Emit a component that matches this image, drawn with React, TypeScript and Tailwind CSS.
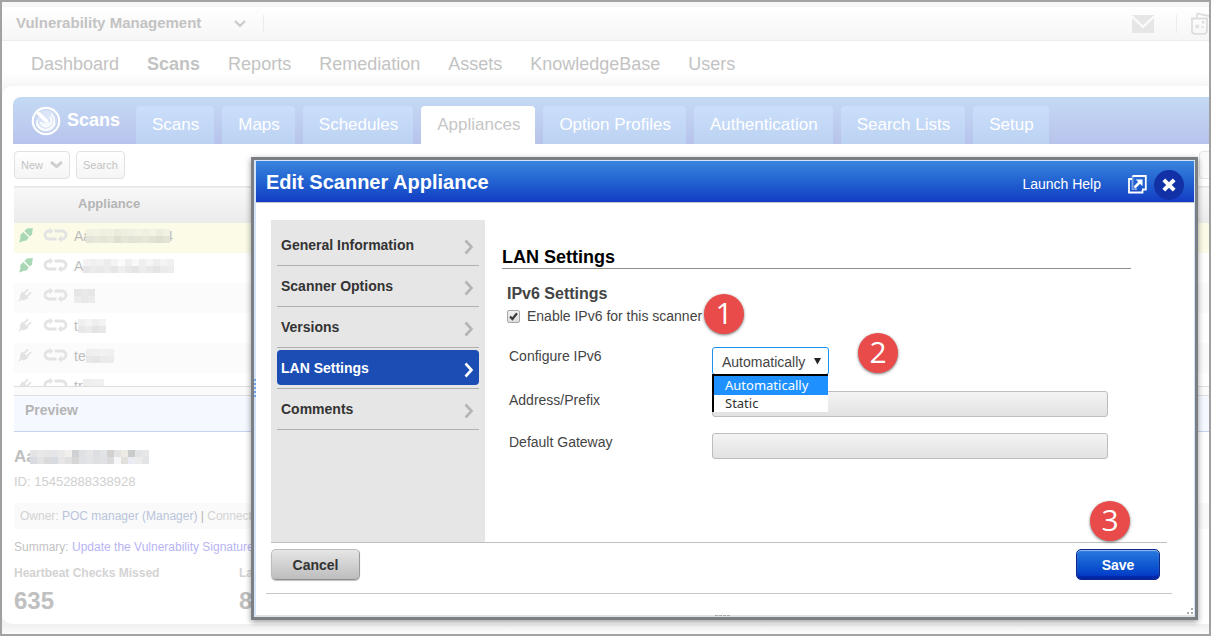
import React, { useState } from "react";

const mainNav = ["Dashboard", "Scans", "Reports", "Remediation", "Assets", "KnowledgeBase", "Users"];
const tabs = ["Scans", "Maps", "Schedules", "Appliances", "Option Profiles", "Authentication", "Search Lists", "Setup"];
const steps = ["General Information", "Scanner Options", "Versions", "LAN Settings", "Comments"];

type Row = { name: string; online: boolean; blocks: string[][]; tail?: string };

const rows: Row[] = [
  {
    name: "Aa",
    online: true,
    blocks: [
      ["#f1f1e2", "#f3f3e3", "#f0f0e0", "#f1f1e1", "#ececdd", "#eeeedf", "#f0f0e2", "#f3f3e4", "#f0f0e1", "#f3f3e4", "#ededde", "#f2f2e3"],
      ["#e4e4d8", "#e7e7da", "#e5e5d8", "#e9e9db", "#dfdfd2", "#e6e6d8", "#e2e2d5", "#e4e4d7", "#e8e8da", "#e3e3d5", "#dedfd0", "#e3e3d6"],
    ],
    tail: "4",
  },
  {
    name: "A",
    online: true,
    blocks: [
      ["#f3f3f3", "#f0f0f0", "#f2f2f2", "#ededed", "#f4f4f4", "#fbfbfb", "#f0f0f0", "#f9f9f9", "#efefef", "#f5f5f5", "#eeeeee", "#f4f4f4", "#f0f0f0"],
      ["#e6e6e6", "#ebebeb", "#e8e8e8", "#ececec", "#e6e6e6", "#efefef", "#e9e9e9", "#e5e5e5", "#ececec", "#e8e8e8", "#e4e4e4", "#ebebeb", "#ededed"],
    ],
  },
  { name: "", online: false, blocks: [["#e6e6e6", "#e9e9e9", "#e6e6e6"], ["#ececec", "#e8e8e8", "#ebebeb"]] },
  { name: "t", online: false, blocks: [["#efefef", "#f4f4f4", "#eeeeee", "#f3f3f3"], ["#e8e8e8", "#ebebeb", "#e4e4e4", "#e8e8e8"]] },
  { name: "te", online: false, blocks: [["#eeeeee", "#f0f0f0", "#f2f2f2", "#f0f0f0"], ["#e8e8e8", "#e5e5e5", "#ebebeb", "#ececec"]] },
  { name: "tr", online: false, blocks: [["#eeeeee", "#f0f0f0", "#f0f0f0"], ["#e8e8e8", "#e8e8e8", "#ebebeb"]] },
];

const previewBlocks = [
  ["#e2e4e6", "#e8e8e8", "#e6e6e6", "#e4e6e9", "#e9e9e9", "#f2f0ec", "#cfd1d5", "#e0e1e4", "#e6e6e6", "#dcdee2", "#e2e3e6", "#d2d1cf", "#e3e3e3", "#eeebe4", "#c9cbca", "#e2e3e4", "#e6e7e9"],
  ["#d9dbe0", "#e3e3e3", "#dadada", "#d7dadf", "#e6e6e6", "#e1e1e1", "#d6d6d6", "#e0e2e5", "#e2e4e6", "#e0e0e2", "#dfe1e4", "#dadada", "#f6f6f9", "#e2e0dc", "#e9ecf2", "#ebebeb", "#e2e4e6"],
];

function Mosaic({ blocks, className = "" }: { blocks: string[][]; className?: string }) {
  const w = blocks[0].length * 7;
  return (
    <svg width={w} height="14" viewBox={`0 0 ${w} 14`} aria-hidden="true" className={`relative shrink-0 ${className}`}>
      {blocks.map((line, y) =>
        line.map((c, x) => <rect key={`${x}-${y}`} x={x * 7} y={y * 7} width="7" height="7" fill={c} />)
      )}
    </svg>
  );
}

function PlugIcon({ online }: { online: boolean }) {
  return online ? (
    <svg width="16" height="16" viewBox="0 0 16 16" fill="#a9d8b6" aria-hidden="true">
      <path d="M14.8 1 L9 1.4 L6.4 4 L11.8 9.6 L14 7.2 Z" />
      <path d="M5.4 5 L10.8 10.6 L8.6 13.4 L5 14 L2.4 15.6 L1.2 14.4 L2.2 12.6 L2.4 8 Z" />
    </svg>
  ) : (
    <svg width="14" height="14" viewBox="0 0 14 14" fill="#e3e3e3" aria-hidden="true">
      <path d="M4.6 3.6 L10.4 9.4 C8.4 12 5.6 12.6 3.4 11.8 L1.6 13.4 L0.4 12.4 L2.2 10.6 C1.4 8.2 2.2 5.4 4.6 3.6Z" />
      <path d="M6.5 4.8 L9.6 1.6 M9.4 7.7 L12.6 4.6" stroke="#e3e3e3" strokeWidth="1.8" strokeLinecap="round" />
    </svg>
  );
}

function LoopIcon() {
  return (
    <svg width="25" height="14" viewBox="0 0 25 14" fill="none" stroke="#e3e3e3" strokeWidth="2.8" aria-hidden="true">
      <path d="M13.5 11 H6 A4 4 0 0 1 6 3 H8" />
      <path d="M11.5 3 H19 A4 4 0 0 1 19 11 H17.5" />
      <path d="M6.6 -0.4 L10.2 3 L6.6 6.4Z M18.4 7.6 L14.8 11 L18.4 14.4Z" fill="#e3e3e3" stroke="none" />
    </svg>
  );
}

function RadarIcon() {
  return (
    <svg width="30" height="30" viewBox="0 0 30 30" fill="none" stroke="#fff" aria-hidden="true">
      <circle cx="15" cy="15" r="13.2" strokeWidth="2.2" />
      <circle cx="15" cy="15" r="11" fill="#dbe5f7" stroke="none" />
      <path d="M7.5 7.5 L15.5 15" strokeWidth="3.6" strokeLinecap="round" />
      <path d="M20.5 8 A9 9 0 1 1 5.6 14" strokeWidth="1.9" />
      <path d="M18.8 10.6 A5.6 5.6 0 1 1 9.6 16" strokeWidth="1.6" />
      <path d="M12.2 17 A3.4 3.4 0 0 0 18.2 16" strokeWidth="1.3" />
      <path d="M7 9 A10 10 0 0 0 5 18 M22 8 A10 10 0 0 1 25 17" stroke="#bccdf0" strokeWidth="0.9" />
    </svg>
  );
}

function Badge({ n, place }: { n: number; place: string }) {
  return (
    <span
      className={`absolute flex h-10 w-10 items-center justify-center rounded-full bg-[#e94a4a] pb-[3px] font-['Open_Sans',sans-serif] text-[30px] leading-10 text-white shadow-[0_1px_3px_rgba(0,0,0,0.55)] ${place}`}
    >
      {n}
    </span>
  );
}

function AppliancePage() {
  return (
    <div className="flex min-h-screen flex-col border-2 border-[#a3a3a3] bg-[#f7f7f7]">
      <header className="mt-1 flex h-[35px] items-center border-y border-t-[#f4f4f4] border-b-[#ececec] bg-linear-to-b from-white to-[#f6f6f6] pl-[14px] shadow-[0_1px_2px_rgba(0,0,0,0.05)]">
        <button type="button" className="flex items-center gap-[33px] text-[15px] font-bold text-[#c3c3c3]">
          Vulnerability Management
          <svg width="12" height="8" viewBox="0 0 12 8" fill="none" stroke="#cbcbcb" strokeWidth="2.4" aria-hidden="true">
            <path d="M1 1 L6 5.8 L11 1" />
          </svg>
        </button>
        <span className="ml-[17px] h-[18px] border-l border-[#ececec]" />
        <div className="ml-auto flex items-center gap-[14px]">
          <button type="button" aria-label="Messages" className="mr-2">
            <svg width="22" height="18" viewBox="0 0 22 18" aria-hidden="true">
              <rect width="22" height="18" fill="#e6e6e6" />
              <path d="M0 1.5 L11 12 L22 1.5" fill="none" stroke="#fcfcfc" strokeWidth="2.2" />
            </svg>
          </button>
          <span className="h-[18px] border-l border-[#ececec]" />
          <button type="button" aria-label="Applications">
            <svg width="18" height="24" viewBox="0 0 18 24" fill="none" stroke="#dedede" strokeWidth="1.8" aria-hidden="true">
              <path d="M5.5 5.5 L6.5 1.5 L18 4" />
              <path d="M1 6.5 H16 V20 L14 21.8 H3 L1 20Z" />
              <path d="M6.2 11.5 L7 13.4 L9 13.6 L7.6 15 L8 17 L6.2 16 L4.4 17 L4.8 15 L3.4 13.6 L5.4 13.4Z" fill="#dedede" stroke="none" />
              <path d="M11 9 h2.5 v2.5 h-2.5z M10.5 14 h2 v2 h-2z" fill="#dedede" stroke="none" />
            </svg>
          </button>
        </div>
      </header>

      <nav className="flex h-[45px] items-center gap-[28px] bg-linear-to-b from-white from-70% to-[#f7f7f7] pt-[2px] pl-[29px] text-[18px] text-[#c3c3c3]">
        {mainNav.map((n) => (
          <a key={n} href="#" className={n === "Scans" ? "font-bold" : ""}>
            {n}
          </a>
        ))}
      </nav>

      <main className="flex-1 rounded-l-[10px] bg-white pt-[11px] pl-[11px] shadow-[0_2px_6px_rgba(0,0,0,0.05)]">
        <div className="flex h-[47px] items-end gap-2 rounded-tl-lg bg-linear-to-b from-[#c4daf4] to-[#b8c3ec]">
          <div className="flex h-full w-[115px] items-center gap-[6px] pl-[18px]">
            <RadarIcon />
            <h1 className="text-[18px] font-bold text-white">Scans</h1>
          </div>
          {tabs.map((t) => (
            <a
              key={t}
              href="#"
              className={`flex h-[38px] items-center rounded-t pr-[15px] pl-4 text-[17px] ${
                t === "Appliances" ? "bg-white text-[#c6c6c6]" : "bg-linear-to-b from-[#cbdffb] to-[#bcd2f2] text-white"
              }`}
            >
              {t}
            </a>
          ))}
        </div>

        <div className="flex gap-[6px] pt-[7px] pl-px text-[11px] text-[#c3c3c3]">
          <button type="button" className="flex h-7 items-center gap-[7px] rounded border border-[#e2e2e2] bg-linear-to-b from-white to-[#f5f5f5] px-[6px]">
            New
            <svg width="13" height="8" viewBox="0 0 13 8" fill="none" stroke="#cfcfcf" strokeWidth="3" aria-hidden="true">
              <path d="M1 1 L6.5 5.6 L12 1" />
            </svg>
          </button>
          <button type="button" className="h-7 rounded border border-[#e2e2e2] bg-linear-to-b from-white to-[#f5f5f5] px-[6px]">
            Search
          </button>
          <button type="button" aria-label="List options" className="ml-auto h-7 w-[10px] rounded-l border border-r-0 border-[#e6e6e6] bg-[#fafafa]" />
        </div>

        <div className="mt-[7px] ml-px h-[200px] overflow-hidden">
          <table className="w-full table-fixed border-collapse text-[13px] text-[#bdbdbd]">
            <colgroup>
              <col className="w-[29px]" />
              <col className="w-[29px]" />
              <col />
            </colgroup>
            <thead>
              <tr className="h-9 border-t border-[#e6e6e6] bg-linear-to-b from-[#f8f8f8] to-[#ebebeb]">
                <th />
                <th />
                <th className="pb-[3px] pl-[6px] text-left font-bold text-[#b5b5b5]">Appliance</th>
              </tr>
            </thead>
            <tbody>
              {rows.map((r, i) => (
                <tr key={i} className={`h-[30px] ${i === 0 ? "bg-[#fbfbe8]" : i % 2 === 0 ? "bg-[#fbfbfb]" : "bg-white"}`}>
                  <td className="pb-[5px] pl-1">
                    <PlugIcon online={r.online} />
                  </td>
                  <td className="pb-[5px]">
                    <LoopIcon />
                  </td>
                  <td className="pb-1 pl-[2px]">
                    <span className="flex items-center text-sm">
                      {r.name}
                      <Mosaic blocks={r.blocks} className={r.tail ? "-mx-[5px]" : ""} />
                      {r.tail}
                    </span>
                  </td>
                </tr>
              ))}
            </tbody>
          </table>
        </div>

        <section className="ml-px">
          <div className="h-[10px] border-y border-[#dedede] bg-[#fbfbfb]" />
          <h2 className="h-9 border-b border-[#c6d3ec] bg-[#f5f9ff] pt-1 pl-[11px] text-sm font-bold text-[#b5b5b5]">Preview</h2>
          <h3 className="flex items-center pt-[13px] text-[17px] leading-6 font-bold text-[#c0c0c0]">
            Aa
            <Mosaic blocks={previewBlocks} className="-ml-[6px]" />
          </h3>
          <p className="pt-px text-[13px] leading-6 text-[#d0d0d0]">ID: 15452888338928</p>
          <p className="mt-[9px] bg-[#fafafa] pl-[6px] text-xs leading-[26px] text-[#d3d3d3]">
            Owner: <span className="text-[#b9c4da]">POC manager (Manager)</span> <span className="text-[#b5b5b5]">|</span> Connected
          </p>
          <p className="pt-[6px] text-xs leading-6 text-[#c3c3c3]">
            Summary:{" "}
            <a href="#" className="text-[#b8b4f4]">
              Update the Vulnerability Signatures
            </a>
          </p>
          <dl className="flex pt-[2px] font-bold">
            <div className="w-[225px]">
              <dt className="text-xs leading-6 text-[#d3d3d3]">Heartbeat Checks Missed</dt>
              <dd className="text-2xl text-[#c0c0c0]">635</dd>
            </div>
            <div>
              <dt className="text-xs leading-6 text-[#d3d3d3]">Last</dt>
              <dd className="text-2xl text-[#c0c0c0]">8</dd>
            </div>
          </dl>
        </section>
      </main>
      <footer className="h-[10px] bg-linear-to-b from-[#f0f0f0] to-[#fbfbfb]" />
    </div>
  );
}

function EditDialog() {
  const [enabled, setEnabled] = useState(true);
  const [mode, setMode] = useState("Automatically");
  return (
    <div
      role="dialog"
      aria-labelledby="dialog-title"
      className="absolute top-[157px] right-[13px] left-[251px] border-[3px] border-[#7b7f84] bg-white shadow-[0_2px_6px_rgba(0,0,0,0.4)]"
    >
      <div className="relative border border-b-2 border-l-2 border-[#d3e3fa] border-b-[#e2e2e2] text-sm text-[#444]">
        <header className="flex h-[42px] items-center border-b border-[#c4c4cc] bg-linear-to-b from-[#3a84dc] to-[#153bc4] pr-[10px] pl-[10px] text-white">
          <h2 id="dialog-title" className="text-xl font-bold">
            Edit Scanner Appliance
          </h2>
          <a href="#" className="ml-auto pt-[4px]">
            Launch Help
          </a>
          <button type="button" aria-label="Open in new window" className="ml-[27px] pt-[5px]">
            <svg width="19" height="19" viewBox="0 0 19 19" fill="none" stroke="#fff" strokeWidth="1.8" aria-hidden="true">
              <path d="M4 4 H1 V17.5 H14.5 V15" />
              <path d="M4.5 1 H17.8 V14.5 H14" />
              <path d="M4.5 1 V14.2 H9" strokeOpacity="0.45" />
              <path d="M6.5 12.5 L12.5 6.5" strokeWidth="2.6" />
              <path d="M7.8 4.5 H14.5 V11.2Z" fill="#fff" stroke="none" />
            </svg>
          </button>
          <button type="button" aria-label="Close" className="mt-[6px] ml-[7px] flex h-[30px] w-[30px] items-center justify-center rounded-full bg-[#1231a6]">
            <svg width="14" height="14" viewBox="0 0 14 14" stroke="#fff" strokeWidth="4" aria-hidden="true">
              <path d="M1.8 1.8 L12.2 12.2 M12.2 1.8 L1.8 12.2" />
            </svg>
          </button>
        </header>

        <div className="pt-[17px] pr-[22px] pb-[21px] pl-[10px]">
          <div className="border-b border-[#c6c6c6] pb-[13px]">
            <div className="mr-[5px] ml-[5px] flex border-b border-[#c0c0c0]">
              <nav className="h-[322px] w-[214px] shrink-0 bg-[#e6e6e6] px-[6px] pt-[5px]">
                {steps.map((s) => {
                  const active = s === "LAN Settings";
                  return (
                    <a key={s} href="#" className="flex h-[41px] items-center border-b border-[#b0b0b0] pb-px">
                      <span
                        className={`flex h-[35px] flex-1 items-center justify-between rounded pr-[5px] pl-1 font-bold ${
                          active ? "bg-[#1b4db5] text-white" : "text-[#333]"
                        }`}
                      >
                        {s}
                        <svg width="10" height="16" viewBox="0 0 10 16" fill="none" stroke={active ? "#fff" : "#b5b5b5"} strokeWidth="2.6" className="mt-1" aria-hidden="true">
                          <path d="M1.5 1.5 L7.5 8 L1.5 14.5" />
                        </svg>
                      </span>
                    </a>
                  );
                })}
              </nav>

              <form className="ml-[17px] flex-1 pt-[26px] pr-9">
                <h3 className="border-b border-[#8c8c8c] text-lg leading-[22px] font-bold text-black">LAN Settings</h3>
                <h4 className="mt-[14px] ml-[5px] text-base leading-[22px] font-bold">IPv6 Settings</h4>
                <div className="relative ml-[5px] flex h-[22px] items-center">
                  <input
                    id="ipv6"
                    type="checkbox"
                    checked={enabled}
                    onChange={(e) => setEnabled(e.target.checked)}
                    className="peer h-[13px] w-[13px] appearance-none rounded-[2px] border border-[#a8a8a8] bg-linear-to-b from-[#f2f2f2] to-[#dedede]"
                  />
                  <svg width="13" height="13" viewBox="0 0 13 13" fill="none" stroke="#3c3c3c" strokeWidth="2.2" className="pointer-events-none absolute left-0 hidden peer-checked:block" aria-hidden="true">
                    <path d="M3 6.5 L5.4 9 L10 3.2" />
                  </svg>
                  <label htmlFor="ipv6" className="ml-[7px]">
                    Enable IPv6 for this scanner
                  </label>
                  <Badge n={1} place="top-[-11px] left-[197px]" />
                </div>

                <div className="mt-[20px] ml-[7px] grid grid-cols-[203px_1fr] pr-[23px]">
                  <label htmlFor="mode" className="leading-[18px]">
                    Configure IPv6
                  </label>
                  <div className="relative w-[117px]">
                    <select
                      id="mode"
                      value={mode}
                      onChange={(e) => setMode(e.target.value)}
                      className="h-7 w-full appearance-none rounded-[3px] border border-[#1a94f0] bg-white pt-[2px] pl-[9px] text-sm"
                    >
                      <option>Automatically</option>
                      <option>Static</option>
                    </select>
                    <svg width="7" height="7" viewBox="0 0 7 7" className="pointer-events-none absolute top-[11px] right-2" aria-hidden="true">
                      <path d="M0 0 H7 L3.5 6.5Z" fill="#222" />
                    </svg>
                    <ul
                      role="listbox"
                      aria-label="Configure IPv6 choices"
                      className="absolute top-[27px] left-0 z-10 w-[116px] border-t-2 border-l-2 border-black bg-white font-['Noto_Sans',sans-serif] text-[13px] text-[#333]"
                    >
                      <li role="option" aria-selected="true" className="bg-[#1e90ff] pl-[11px] leading-[19px] text-white">
                        Automatically
                      </li>
                      <li role="option" aria-selected="false" className="bg-white pl-[11px] leading-[17px]">
                        Static
                      </li>
                    </ul>
                    <Badge n={2} place="top-[-14px] left-[146px]" />
                  </div>

                  <label htmlFor="address" className="mt-4 leading-[18px]">
                    Address/Prefix
                  </label>
                  <input id="address" type="text" className="mt-4 h-[26px] rounded-[3px] border border-[#bdbdbd] bg-linear-to-b from-[#f4f4f4] to-[#e2e2e2]" />
                  <label htmlFor="gateway" className="mt-4 leading-[18px]">
                    Default Gateway
                  </label>
                  <input id="gateway" type="text" className="mt-4 h-[26px] rounded-[3px] border border-[#bdbdbd] bg-linear-to-b from-[#f4f4f4] to-[#e2e2e2]" />
                </div>
              </form>
            </div>

            <div className="relative flex items-center justify-between pt-[6px] pr-[12px] pl-[5px]">
              <button
                type="button"
                className="h-[31px] w-[89px] rounded-[5px] border border-[#bcbcbc] border-r-[#9a9a9a] border-b-[#8e8e8e] bg-linear-to-b from-[#e6e6e6] to-[#bdbdbd] font-bold text-[#333] shadow-[0_1px_1px_rgba(0,0,0,0.25)]"
              >
                Cancel
              </button>
              <button
                type="button"
                className="h-[31px] w-[84px] rounded-[5px] border border-[#0b2a8a] bg-linear-to-b from-[#2a7ade] to-[#0632c4] font-bold text-white shadow-[inset_0_1px_1px_rgba(255,255,255,0.5),inset_0_-3px_1px_rgba(0,10,110,0.35)]"
              >
                Save
              </button>
              <Badge n={3} place="top-[-42px] right-[42px]" />
            </div>
          </div>
        </div>

        <svg width="7" height="7" viewBox="0 0 7 7" fill="#aaa" className="absolute right-0 bottom-0" aria-hidden="true">
          <path d="M4 0h2v2h-2z M0 4h2v2h-2z M4 4h2v2h-2z" />
        </svg>
        <svg width="2" height="18" viewBox="0 0 2 18" fill="#6ea6e8" className="absolute top-[218px] left-[-2px]" aria-hidden="true">
          <path d="M0 0h2v2h-2z M0 4h2v2h-2z M0 8h2v2h-2z M0 12h2v2h-2z M0 16h2v2h-2z" />
        </svg>
        <svg width="17" height="2" viewBox="0 0 17 2" fill="#aaa" className="absolute bottom-[-2px] left-[459px]" aria-hidden="true">
          <path d="M0 0h3v1h-3z M4 0h3v1h-3z M8 0h3v1h-3z M12 0h3v1h-3z" />
        </svg>
      </div>
    </div>
  );
}

export default function App() {
  return (
    <div className="relative overflow-hidden font-['Liberation_Sans',Arial,sans-serif]">
      <AppliancePage />
      <EditDialog />
    </div>
  );
}
